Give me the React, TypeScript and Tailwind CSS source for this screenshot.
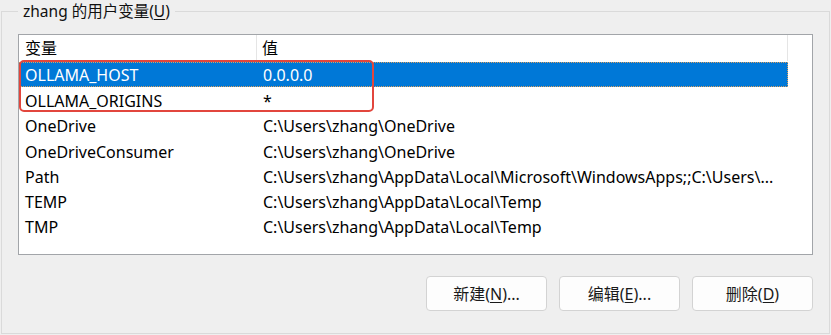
import React from 'react'

const font = { fontFamily: '"Noto Sans", "Noto Sans CJK SC", sans-serif' }

const rows: { name: string; value: string }[] = [
  { name: 'OLLAMA_HOST', value: '0.0.0.0' },
  { name: 'OLLAMA_ORIGINS', value: '*' },
  { name: 'OneDrive', value: 'C:\\Users\\zhang\\OneDrive' },
  { name: 'OneDriveConsumer', value: 'C:\\Users\\zhang\\OneDrive' },
  { name: 'Path', value: 'C:\\Users\\zhang\\AppData\\Local\\Microsoft\\WindowsApps;;C:\\Users\\...' },
  { name: 'TEMP', value: 'C:\\Users\\zhang\\AppData\\Local\\Temp' },
  { name: 'TMP', value: 'C:\\Users\\zhang\\AppData\\Local\\Temp' },
]

function Btn(props: { label: string; hot: string; rest: string }) {
  return (
    <button
      type="button"
      className="h-[35px] w-[121px] rounded-[4px] border border-[#d3d3d3] bg-[#fdfdfd] text-[16px] text-[#1a1a1a]"
    >
      {props.label}(<span className="underline underline-offset-2">{props.hot}</span>){props.rest}
    </button>
  )
}

export default function App() {
  return (
    <div className="h-[335px] w-[831px] overflow-hidden bg-[#efefef] pt-[1px] text-black" style={font}>
      <fieldset className="ml-[1px] h-[333px] w-[829px] border border-[#dadada] px-[16px]">
        <legend className="px-[5px] text-[15.5px] leading-[20px] text-[#111]">
          zhang 的用户变量(<span className="underline underline-offset-2">U</span>)
        </legend>

        <div className="relative mt-[13px] h-[221px] w-[795px] border border-[#a2a5a9] bg-white">
          {/* header */}
          <div className="flex h-[26px] text-[16px] leading-[27px]">
            <div className="w-[238px] border-r border-[#e5e5e5] pl-[6px]">变量</div>
            <div className="w-[531px] border-r border-[#e5e5e5] pl-[5px]">值</div>
          </div>

          <div className="mt-[1px]">
            {rows.map((r, i) => (
              <div
                key={r.name}
                className={
                  i === 0
                    ? 'flex h-[25px] w-[769px] bg-[#0078d7] text-[16px] leading-[27px] text-white outline-1 -outline-offset-1 outline-dotted outline-[#d9a060]'
                    : 'flex h-[25.3px] w-[769px] text-[16px] leading-[28px]'
                }
              >
                <div className="w-[238px] whitespace-nowrap pl-[6px]">{r.name}</div>
                <div className="whitespace-nowrap pl-[6px]">{r.value}</div>
              </div>
            ))}
          </div>

          {/* red annotation box */}
          <div className="absolute left-0 top-[25px] h-[52px] w-[355px] rounded-[5px] border-2 border-[#e2463d]" />
        </div>

        <div className="mt-[21px] flex justify-end gap-[12px]">
          <Btn label="新建" hot="N" rest="..." />
          <Btn label="编辑" hot="E" rest="..." />
          <Btn label="删除" hot="D" rest="" />
        </div>
      </fieldset>
    </div>
  )
}
